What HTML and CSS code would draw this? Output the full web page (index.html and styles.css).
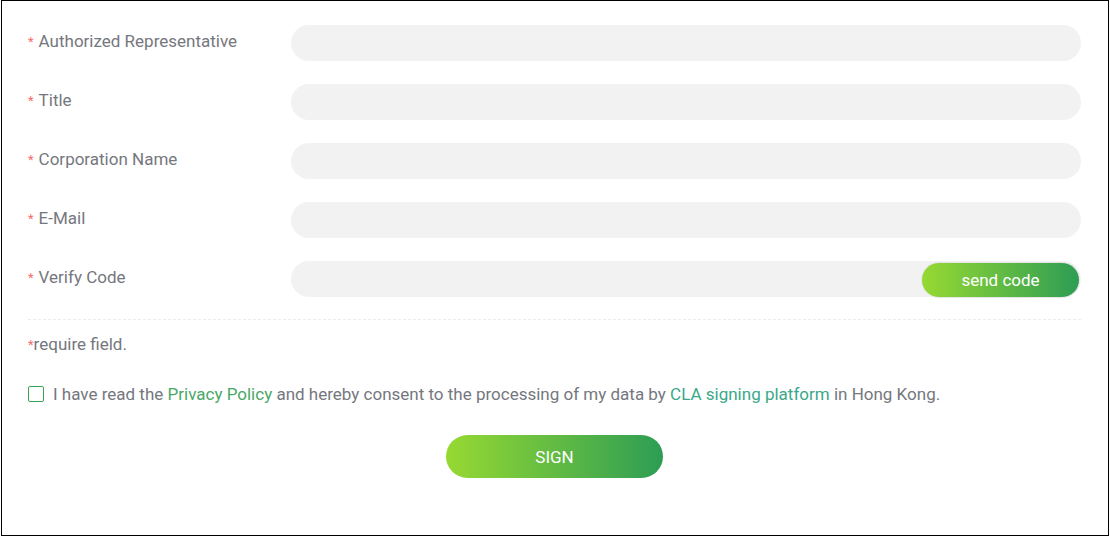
FILE: index.html
```html
<!DOCTYPE html>
<html>
<head>
<meta charset="utf-8">
<link rel="stylesheet" href="styles.css">
</head>
<body>
<div class="frame">
  <form class="form">
    <div class="row">
      <label class="label"><span class="star">*</span>Authorized Representative</label>
      <div class="field"><input class="input" type="text"></div>
    </div>
    <div class="row">
      <label class="label"><span class="star">*</span>Title</label>
      <div class="field"><input class="input" type="text"></div>
    </div>
    <div class="row">
      <label class="label"><span class="star">*</span>Corporation Name</label>
      <div class="field"><input class="input" type="text"></div>
    </div>
    <div class="row">
      <label class="label"><span class="star">*</span>E-Mail</label>
      <div class="field"><input class="input" type="text"></div>
    </div>
    <div class="row">
      <label class="label"><span class="star">*</span>Verify Code</label>
      <div class="field code-field">
        <input class="input" type="text">
        <button type="button" class="send-btn">send code</button>
      </div>
    </div>
    <div class="divider"></div>
    <div class="required"><span class="star tight">*</span>require field.</div>
    <div class="consent">
      <span class="checkbox"></span>
      <span class="consent-text">I have read the <a class="link">Privacy Policy</a> and hereby consent to the processing of my data by <a class="link link-cla">CLA signing platform</a> in Hong Kong.</span>
    </div>
    <div class="actions">
      <button type="button" class="sign-btn">SIGN</button>
    </div>
  </form>
</div>
</body>
</html>
```
FILE: styles.css
```css
html, body {
  margin: 0;
  padding: 0;
  background: #fff;
}
body {
  font-family: Roboto, "Liberation Sans", sans-serif;
  font-size: 17px;
  font-weight: 400;
  color: #75777e;
}
.frame {
  box-sizing: border-box;
  margin-left: 1px;
  width: 1108px;
  height: 536px;
  border: 1px solid #000;
  padding: 24px 27px 0 26px;
}
.form {
  display: flex;
  flex-direction: column;
}
.row {
  display: flex;
  align-items: flex-start;
  margin-bottom: 23px;
}
.row:nth-child(5) {
  margin-bottom: 0;
}
.label {
  width: 263px;
  flex: none;
  line-height: 33px;
}
.star {
  color: #f56c6c;
  font-size: 13px;
  margin-right: 5px;
  vertical-align: 1px;
}
.star.tight {
  margin-right: 0;
}
.field {
  flex: 1;
  position: relative;
  display: flex;
}
.input {
  flex: 1;
  box-sizing: border-box;
  height: 36px;
  border: none;
  outline: none;
  border-radius: 18px;
  background: #f2f2f2;
  padding: 0 18px;
  font-family: inherit;
  font-size: 16px;
}
.send-btn {
  position: absolute;
  right: 1px;
  top: 1px;
  width: 159px;
  height: 36px;
  box-sizing: border-box;
  border: 1px solid #e6e6e6;
  border-radius: 18px;
  background: linear-gradient(90deg, #97d932 0%, #2d9d54 100%);
  color: #fff;
  font-family: inherit;
  font-size: 17px;
  padding: 0;
  cursor: pointer;
}
.divider {
  margin-top: 22px;
  border-top: 1px dashed #ececec;
}
.required {
  margin-top: 13px;
  line-height: 22px;
}
.consent {
  margin-top: 27px;
  display: flex;
  align-items: center;
  line-height: 22px;
}
.checkbox {
  width: 16px;
  height: 16px;
  box-sizing: border-box;
  border: 1.5px solid #3aa356;
  border-radius: 2px;
  margin-right: 9px;
  flex: none;
}
.link {
  color: #4aa866;
  text-decoration: none;
}
.link-cla {
  color: #3aa888;
}
.actions {
  margin-top: 30px;
  display: flex;
  justify-content: center;
}
.sign-btn {
  width: 217px;
  height: 43px;
  border: none;
  border-radius: 22px;
  background: linear-gradient(90deg, #97d932 0%, #2d9d54 100%);
  color: #fff;
  font-family: inherit;
  font-size: 17px;
  padding: 0;
  cursor: pointer;
}
```
